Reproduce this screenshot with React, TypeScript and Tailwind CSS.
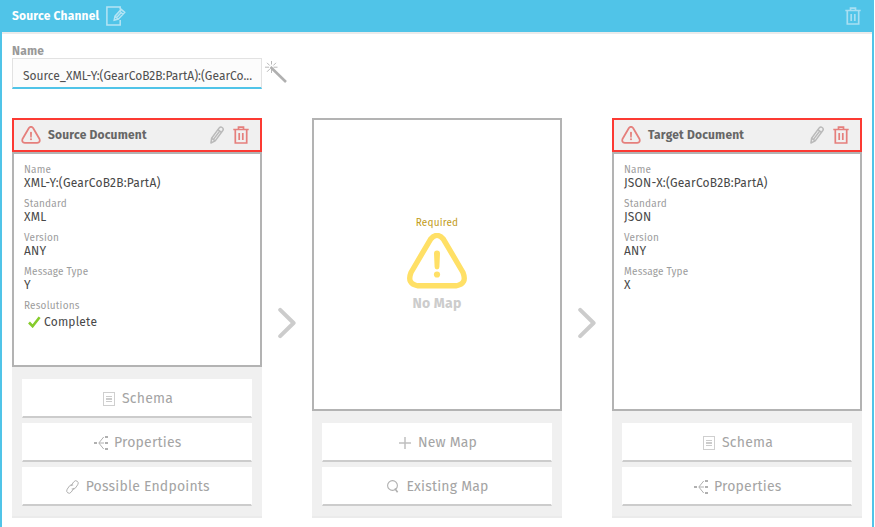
import type { ReactNode } from "react";

function TrashIcon({ className }: { className: string }) {
  return (
    <svg viewBox="0 0 16 18" fill="none" stroke="currentColor" className={className}>
      <path d="M0.3 3.5h15.4M5.5 3V1.2h5V3M2.3 4v13h11.4V4" strokeWidth="1.7" />
      <path d="M6.2 7v7M9.8 7v7" strokeWidth="1.7" />
    </svg>
  );
}

function WarningIcon({ className, strokeWidth = 5 }: { className: string; strokeWidth?: number }) {
  return (
    <svg viewBox="0 0 60 56" fill="none" stroke="currentColor" className={className}>
      <path
        d="M23.5 6.3Q30 -1.5 36.5 6.3L56 39.5Q60.5 51 49 52.8H11Q-0.5 51 4 39.5Z"
        strokeWidth={strokeWidth}
        strokeLinejoin="round"
      />
      <path d="M27 20.5a3 3 0 0 1 6 0L32.4 34a2.4 2.4 0 0 1-4.8 0Z" fill="currentColor" stroke="none" />
      <circle cx="30" cy="41.5" r="3.1" fill="currentColor" stroke="none" />
    </svg>
  );
}

function PencilIcon({ className }: { className: string }) {
  return (
    <svg viewBox="0 0 14 18" fill="none" stroke="currentColor" strokeWidth="1.5" strokeLinejoin="round" className={className}>
      <path d="M0.9 17L1.6 12.3L9.2 1.9Q10.6 0.4 12.2 1.5Q13.9 2.8 12.8 4.5L5.2 14.9Z" />
      <path d="M7.9 3.7L11.5 6.3M1.6 12.3L5.2 14.9M3.5 13.4L9.8 5" />
    </svg>
  );
}

function EditIcon() {
  return (
    <svg viewBox="0 0 20 20" fill="none" stroke="currentColor" className="h-5 w-5 text-[#b5e4f4]">
      <path d="M14.2 3.5V0.9H0.9V19.1H14.2V14" strokeWidth="1.5" />
      <path d="M8.2 14.2L9 10.2L15.2 3.4L18.7 6.4L12.4 13.1Z M9 10.2L12.4 13.1M13.7 5.2L17 8.2M10.7 11.5L15.3 6.6" strokeWidth="1.5" />
    </svg>
  );
}

function WandIcon() {
  return (
    <svg viewBox="0 0 22 22" fill="none" stroke="currentColor" className="h-[22px] w-[22px] text-[#b0b0b0]">
      <path d="M5.5 6L21 21" strokeWidth="2.6" />
      <path d="M6.5 0v3.5M6.5 8v4M0 6.2h4M8.5 6.2h4M2 1.8l2.8 2.8M11 1.8L8.3 4.5M2 10.8l2.8-2.8" strokeWidth="0.9" />
    </svg>
  );
}

function SchemaIcon() {
  return (
    <svg viewBox="0 0 12 14" fill="none" className="h-3.5 w-3">
      <rect x="0.5" y="0.5" width="11" height="13" stroke="#cfcfcf" />
      <path d="M3 4.5h6M3 6.5h6M3 7.5h6M3 9.5h6" stroke="#cccccc" />
    </svg>
  );
}

function PropertiesIcon() {
  return (
    <svg viewBox="0 0 15 14" fill="none" stroke="#b0b0b0" className="h-3.5 w-[15px]">
      <path d="M0 7h3M11 1h3M11 7h3M11 13h3" strokeWidth="2" />
      <path d="M9.7 1L4.8 7L9.7 13M5 7h5" strokeWidth="1" />
    </svg>
  );
}

function LinkIcon() {
  return (
    <svg viewBox="0 0 13 14" fill="none" stroke="#b0b0b0" strokeWidth="1" strokeLinecap="round" className="h-3.5 w-[13px]">
      <path d="M5.1 5.8L7.6 2Q9.2 -0.2 11.2 1.2Q13.2 2.6 11.7 4.8L9.2 8.3Q7.9 9.8 6.1 9" />
      <path d="M7.8 8.2L5.3 12Q3.7 14.2 1.7 12.8Q-0.2 11.4 1.2 9.2L3.7 5.7Q5 4.2 6.8 5" />
    </svg>
  );
}

function PlusIcon() {
  return (
    <svg viewBox="0 0 12 12" stroke="#c0c0c0" strokeWidth="1.5" className="mt-px h-3 w-3">
      <path d="M6 0v12M0 6h12" />
    </svg>
  );
}

function SearchIcon() {
  return (
    <svg viewBox="0 0 12 13" fill="none" stroke="#b0b0b0" className="h-[13px] w-3">
      <circle cx="5.5" cy="5.5" r="4.9" strokeWidth="1.1" />
      <path d="M7.8 8.6L10.6 12.2" strokeWidth="1.6" />
    </svg>
  );
}

function Chevron() {
  return (
    <div className="flex w-[50px] shrink-0 justify-center pt-[189px]">
      <svg viewBox="0 0 18 32" fill="none" stroke="#cccccc" strokeWidth="4" strokeLinecap="round" strokeLinejoin="round" className="h-8 w-[18px]">
        <path d="M2.2 2.8L15.6 16L2.2 29.2" />
      </svg>
    </div>
  );
}

function ActionButton({ icon, gap, children }: { icon: ReactNode; gap: string; children: ReactNode }) {
  return (
    <button
      className={`flex h-[39px] w-full shrink-0 items-center justify-center border-x border-b-2 border-x-transparent border-b-[#cccccc] bg-white pt-0.5 pl-0.5 text-[14px] font-normal text-[#a4a4a4] ${gap}`}
    >
      {icon}
      <span>{children}</span>
    </button>
  );
}

function Footer({ children }: { children: ReactNode }) {
  return (
    <div className="flex flex-col gap-[5px] border-b-2 border-[#ebebeb] bg-[#f0f0f0] px-2.5 pt-3 pb-2.5">{children}</div>
  );
}

function CardHeader({ title }: { title: string }) {
  return (
    <div className="flex h-[34px] shrink-0 items-center border-2 border-[#fc3a33] bg-[#f0f0f0] pl-[7px] pr-[11px]">
      <WarningIcon className="h-[18px] w-5 text-[#e57f7c]" strokeWidth={5.5} />
      <h2 className="ml-[7px] flex-1 text-[12px] font-bold text-[#666666]">{title}</h2>
      <PencilIcon className="mr-[9px] h-[18px] w-3.5 text-[#bababa]" />
      <TrashIcon className="h-[18px] w-4 text-[#e57f7c]" />
    </div>
  );
}

function Field({ label, value }: { label: string; value: string }) {
  return (
    <div className="h-[34px]">
      <dt className="h-[13px] text-[10px] leading-[15px] font-normal text-[#9c9c9c]">{label}</dt>
      <dd className="text-[12px] leading-[14px] text-[#484848]">{value}</dd>
    </div>
  );
}

const schemaButton = (
  <ActionButton icon={<SchemaIcon />} gap="gap-[7px]">Schema</ActionButton>
);
const propertiesButton = (
  <ActionButton icon={<PropertiesIcon />} gap="gap-[4.5px]">Properties</ActionButton>
);

export default function App() {
  return (
    <div className="h-[527px] w-[875px] overflow-hidden bg-white font-['Fira_Sans',Roboto,sans-serif] tracking-[0.2px]">
      <div className="flex h-full w-[874px] flex-col bg-[#50c4e8]">
        <header className="flex h-8 shrink-0 items-center pr-[13px] pl-3 text-white">
          <h1 className="mr-[7px] text-[12px] font-bold">Source Channel</h1>
          <EditIcon />
          <TrashIcon className="ml-auto h-[18px] w-4 text-[#a8dff2]" />
        </header>
        <main className="mx-0.5 flex-1 border-t-2 border-[#ebebeb] bg-white px-2.5">
          <div className="h-[84px] pt-[9px]">
            <label className="block h-[15px] text-[12px] leading-[17px] font-bold text-[#999999]">Name</label>
            <div className="flex gap-[3px]">
              <div className="flex h-[31px] w-[250px] items-center border border-b-2 border-[#e2e2e2] border-b-[#50c4e8] bg-[#fcfcfc] pt-[5px] pl-2.5 text-[12px] tracking-[0.01px] whitespace-nowrap text-[#505050]">
                Source_XML-Y:(GearCoB2B:PartA):(GearCo...
              </div>
              <div className="pt-[3px]">
                <WandIcon />
              </div>
            </div>
          </div>
          <div className="flex h-[400px]">
            <section className="flex w-[250px] shrink-0 flex-col">
              <CardHeader title="Source Document" />
              <dl className="flex-1 border-2 border-[#b3b3b3] px-2.5 pt-[9px]">
                <Field label="Name" value="XML-Y:(GearCoB2B:PartA)" />
                <Field label="Standard" value="XML" />
                <Field label="Version" value="ANY" />
                <Field label="Message Type" value="Y" />
                <dt className="h-[13px] text-[10px] leading-[15px] font-normal text-[#9c9c9c]">Resolutions</dt>
                <dd className="mt-[3px] flex items-center gap-[3px] pl-1 text-[12px] leading-[14px] text-[#484848]">
                  <svg viewBox="0 0 13 12" fill="none" stroke="#86cc2c" strokeWidth="2.6" className="h-3 w-[13px]">
                    <path d="M1 6.5L4.6 10.2L11.6 1.2" />
                  </svg>
                  Complete
                </dd>
              </dl>
              <Footer>
                {schemaButton}
                {propertiesButton}
                <ActionButton icon={<LinkIcon />} gap="gap-[6.5px]">Possible Endpoints</ActionButton>
              </Footer>
            </section>
            <Chevron />
            <section className="flex w-[250px] shrink-0 flex-col">
              <div className="flex flex-1 flex-col items-center border-2 border-[#b3b3b3] pt-[96px]">
                <p className="text-[10px] leading-[15px] font-normal text-[#c29c20]">Required</p>
                <WarningIcon className="mt-0.5 h-14 w-[60px] text-[#ffe066]" strokeWidth={5.4} />
                <p className="mt-[5px] text-[14px] leading-[20px] font-bold text-[#cccccc]">No Map</p>
              </div>
              <Footer>
                <ActionButton icon={<PlusIcon />} gap="gap-[7px]">New Map</ActionButton>
                <ActionButton icon={<SearchIcon />} gap="gap-[7px]">Existing Map</ActionButton>
              </Footer>
            </section>
            <Chevron />
            <section className="flex w-[250px] shrink-0 flex-col">
              <CardHeader title="Target Document" />
              <dl className="flex-1 border-2 border-[#b3b3b3] px-2.5 pt-[9px]">
                <Field label="Name" value="JSON-X:(GearCoB2B:PartA)" />
                <Field label="Standard" value="JSON" />
                <Field label="Version" value="ANY" />
                <Field label="Message Type" value="X" />
              </dl>
              <Footer>
                {schemaButton}
                {propertiesButton}
              </Footer>
            </section>
          </div>
        </main>
      </div>
    </div>
  );
}
